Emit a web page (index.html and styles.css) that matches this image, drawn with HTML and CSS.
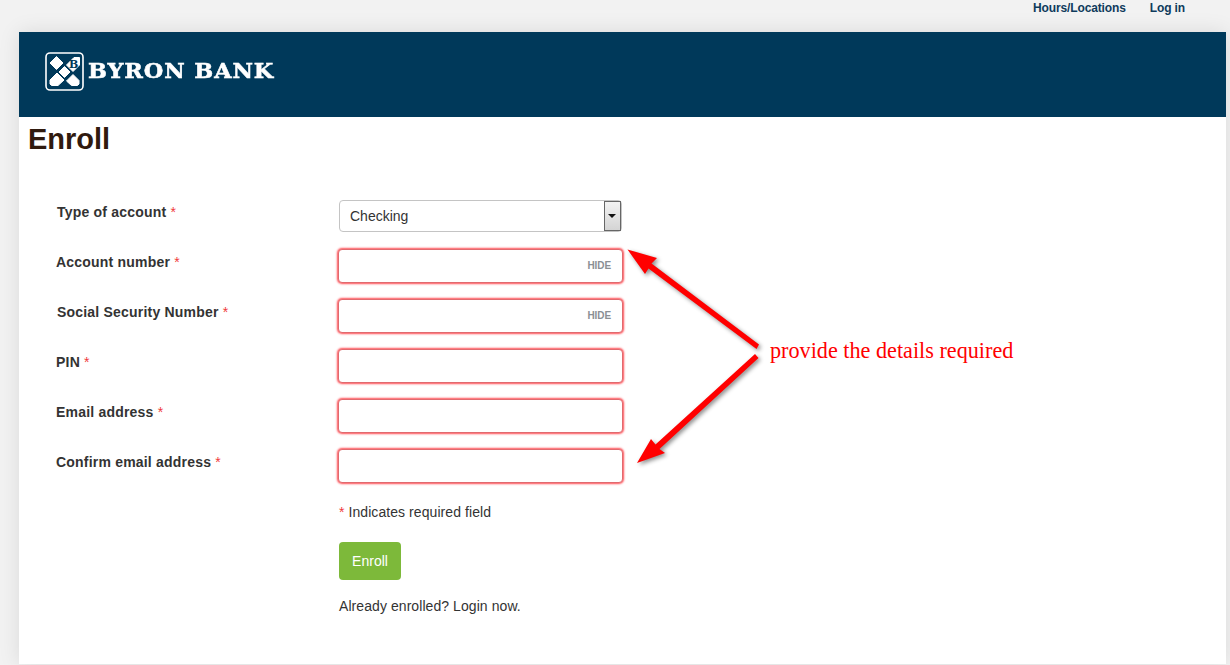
FILE: index.html
```html
<!DOCTYPE html>
<html lang="en">
  <head>
    <meta charset="UTF-8" />
    <meta name="viewport" content="width=device-width, initial-scale=1.0" />
    <title>Enroll - Byron Bank</title>
    <link rel="stylesheet" href="styles.css">
  </head>

  <body>
    <nav class="top-links">
      <a href="#">Hours/Locations</a>
      <a href="#">Log in</a>
    </nav>

    <div class="page">
      <header class="banner">
        <svg class="logo-mark" width="39" height="39" viewBox="0 0 39 39">
          <rect x="1" y="1" width="37" height="37" rx="4" fill="none" stroke="#fff" stroke-width="1.6" />
          <g fill="#fff" stroke="#fff" stroke-width="1" stroke-linejoin="round">
            <path d="M11.5 4.5 L18 11 L11.5 17.5 L5 11 Z" />
            <path d="M21.5 13 L28 19.5 L34.5 13 L34.5 5.5 L29 5.5 Z" />
            <path d="M19.5 14.5 L25 20 L19.5 25.5 L14 20 Z" />
            <path d="M12 21 L19 28 L13 33.5 L6.5 33.5 L5 32 L5 28 Z" />
            <path d="M28 22.5 L34 28.5 L34 32 L32.5 33.5 L26.5 33.5 L21.5 29 Z" />
          </g>
          <text class="logo-b" x="24" y="15.5">B</text>
        </svg>
        <span class="logo-name">BYRON BANK</span>
      </header>

      <h1 class="page-title">Enroll</h1>

      <form class="enroll-form">
        <div class="form-rows">
          <label class="field-label">Type of account <span class="req">*</span></label>
          <div class="select-wrap">
            <select class="select-box">
              <option>Checking</option>
            </select>
            <span class="select-btn"></span>
          </div>

          <label class="field-label nudge">Account number <span class="req">*</span></label>
          <div class="input-wrap">
            <input type="text" class="text-box" />
            <span class="hide-link">HIDE</span>
          </div>

          <label class="field-label">Social Security Number <span class="req">*</span></label>
          <div class="input-wrap">
            <input type="text" class="text-box" />
            <span class="hide-link">HIDE</span>
          </div>

          <label class="field-label nudge">PIN <span class="req">*</span></label>
          <div class="input-wrap"><input type="text" class="text-box" /></div>

          <label class="field-label nudge">Email address <span class="req">*</span></label>
          <div class="input-wrap"><input type="text" class="text-box" /></div>

          <label class="field-label nudge">Confirm email address <span class="req">*</span></label>
          <div class="input-wrap"><input type="text" class="text-box" /></div>
        </div>

        <div class="form-foot">
          <p class="req-note"><span class="req">*</span> Indicates required field</p>
          <button type="button" class="enroll-btn">Enroll</button>
          <p class="login-note">Already enrolled? <a href="#">Login now.</a></p>
        </div>
      </form>
    </div>

    <!-- red notes drawn on top of the page -->
    <svg class="arrows" width="1230" height="665" viewBox="0 0 1230 665">
      <g fill="#ff0000">
        <path d="M627.5 249.5 L657 258 L651.5 263.5 L759 344.5 L756.5 349 L648.5 268.5 L645 274 Z" />
        <path d="M637 463 L651 439 L655.5 444.5 L755 354 L758.5 358 L659.5 449 L665 453 Z" />
      </g>
    </svg>
    <span class="arrow-note">provide the details required</span>
  </body>
</html>
```

FILE: styles.css
```css
html,
body {
  height: 100%;
}

body {
  position: relative;
  margin: 0;
  overflow: hidden;
  font-family: "Liberation Sans", Arial, sans-serif;
  font-size: 14px;
  color: #333333;
  background-color: #f2f2f2;
}

a {
  color: inherit;
  text-decoration: none;
}

.top-links {
  display: flex;
  justify-content: flex-end;
  gap: 24px;
  height: 32px;
  padding: 1px 45px 0 0;
  box-sizing: border-box;
  font-size: 12px;
  font-weight: bold;
  line-height: 15px;
  letter-spacing: -0.13px;
  color: #0f3b5c;
}

.page {
  width: 1207px;
  height: 632px;
  margin-left: 19px;
  background: #ffffff;
  box-shadow: 0 0 20px rgba(0, 0, 0, 0.1);
}

.banner {
  display: flex;
  align-items: center;
  gap: 4px;
  height: 85px;
  padding: 0 0 7px 26px;
  box-sizing: border-box;
  background-color: #00395a;
}

.logo-b {
  font-family: "DejaVu Serif", serif;
  font-size: 11px;
  font-weight: bold;
  fill: #00395a;
}

.logo-name {
  font-family: "DejaVu Serif", serif;
  font-size: 20px;
  font-weight: bold;
  line-height: 24px;
  letter-spacing: 0.8px;
  color: #ffffff;
  -webkit-text-stroke: 0.5px #ffffff;
  transform: scaleX(1.12);
  transform-origin: left center;
}

.page-title {
  margin: 6px 0 0 9px;
  font-size: 29px;
  line-height: 32px;
  font-weight: bold;
  color: #301a0e;
}

.enroll-form {
  margin: 44px 0 0 37px;
}

.form-rows {
  display: grid;
  grid-template-columns: 282px 285px;
  grid-auto-rows: 34px;
  row-gap: 16px;
}

.field-label {
  padding: 4px 0 0 1px;
  font-size: 14px;
  font-weight: bold;
  line-height: 18px;
  letter-spacing: 0.2px;
  color: #333333;
}

.field-label.nudge {
  padding-left: 0;
}

.req {
  font-weight: normal;
  color: #f0393c;
}

.select-wrap {
  position: relative;
  margin: 1px 1px;
  height: 32px;
}

.select-box {
  width: 100%;
  height: 100%;
  padding: 0 0 0 10px;
  border: 1px solid #c4c4c4;
  border-radius: 4px;
  background: #ffffff;
  font-family: inherit;
  font-size: 14px;
  color: #333333;
  appearance: none;
}

.select-btn {
  position: absolute;
  top: 1px;
  right: 1px;
  width: 15px;
  height: 28px;
  border: 1px solid #666666;
  background: linear-gradient(#f2f2f2, #d4d4d4);
}

.select-btn::after {
  content: "";
  position: absolute;
  top: 12px;
  left: 3px;
  border-top: 4px solid #111111;
  border-left: 4px solid transparent;
  border-right: 4px solid transparent;
}

.input-wrap {
  position: relative;
  margin: 0;
}

.text-box {
  display: block;
  width: 100%;
  height: 34px;
  padding: 0 10px;
  box-sizing: border-box;
  border: 1px solid #e06a6e;
  border-radius: 4px;
  background: #ffffff;
  box-shadow: 0 0 2px 1px rgba(255, 20, 30, 0.75);
}

.hide-link {
  position: absolute;
  top: 11px;
  right: 12px;
  font-size: 10px;
  font-weight: bold;
  line-height: 12px;
  letter-spacing: -0.1px;
  color: #8a8f94;
}

.form-foot {
  margin: 19px 0 0 283px;
  letter-spacing: 0.07px;
}

.req-note {
  margin: 0;
  line-height: 20px;
}

.enroll-btn {
  display: block;
  width: 62px;
  height: 38px;
  margin-top: 20px;
  border: none;
  border-radius: 4px;
  background-color: #7db93a;
  font-family: inherit;
  font-size: 14px;
  color: #ffffff;
}

.login-note {
  margin: 16px 0 0;
  line-height: 20px;
}

.arrows {
  position: absolute;
  top: 0;
  left: 0;
  filter: drop-shadow(2px 2px 2px rgba(0, 0, 0, 0.45));
}

.arrow-note {
  position: absolute;
  top: 338px;
  left: 770px;
  font-family: "Liberation Serif", "Times New Roman", serif;
  font-size: 22.2px;
  line-height: 26px;
  color: #ff0000;
}
```
